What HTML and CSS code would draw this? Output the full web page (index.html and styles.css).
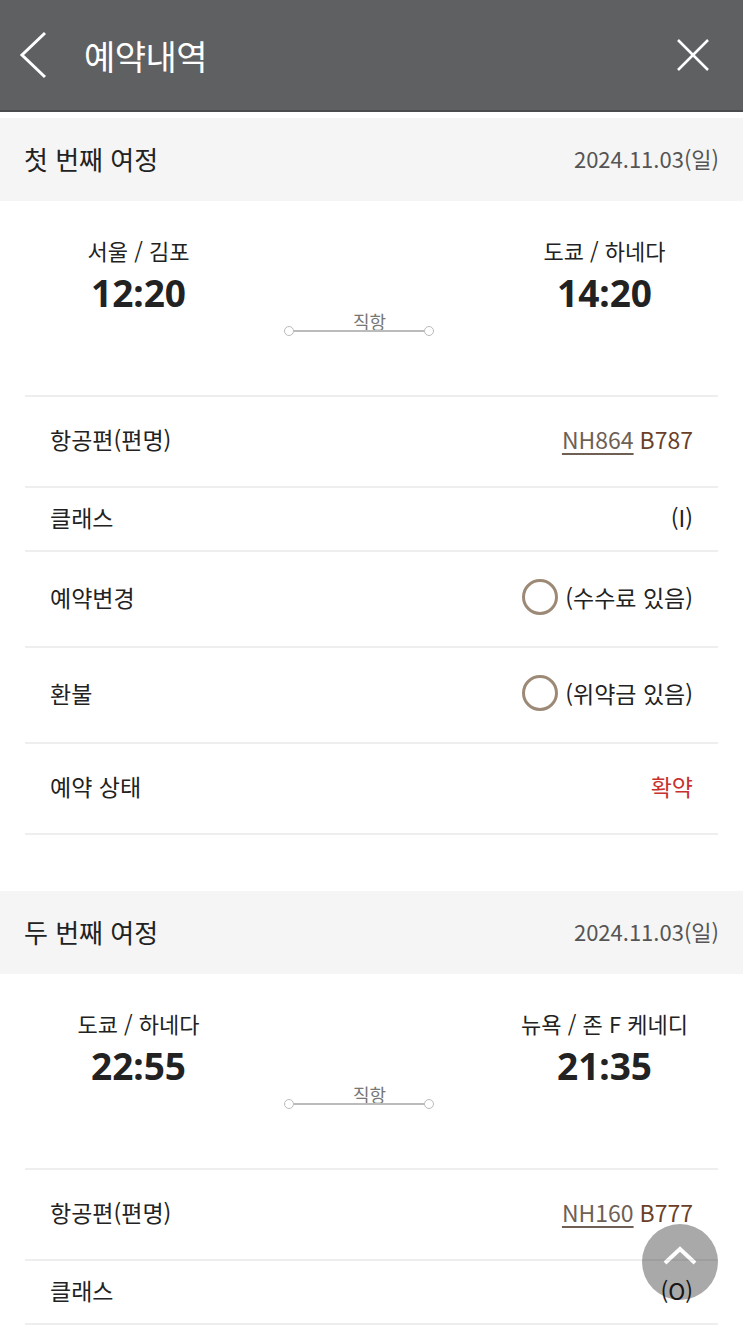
FILE: index.html
```html
<!DOCTYPE html>
<html lang="ko">
<head>
    <meta charset="UTF-8">
    <meta name="viewport" content="width=device-width, initial-scale=1.0">
    <title>예약내역</title>
    <link rel="stylesheet" href="styles.css">
</head>
<body>
    <!-- 상단 헤더 -->
    <header class="top-bar">
        <svg class="icon-back" width="30" height="50" viewBox="0 0 30 50">
            <polyline points="26,3 3,25 26,47" fill="none" stroke="#fff" stroke-width="3"/>
        </svg>
        <h1 class="top-title">예약내역</h1>
        <svg class="icon-close" width="34" height="34" viewBox="0 0 34 34">
            <line x1="2" y1="2" x2="32" y2="32" stroke="#fff" stroke-width="2.5"/>
            <line x1="32" y1="2" x2="2" y2="32" stroke="#fff" stroke-width="2.5"/>
        </svg>
    </header>

    <!-- 첫 번째 여정 -->
    <section class="trip">
        <div class="trip-head">
            <h2>첫 번째 여정</h2>
            <span class="trip-date">2024.11.03(일)</span>
        </div>
        <div class="flight">
            <div class="port">
                <span class="city">서울 / 김포</span>
                <span class="time">12:20</span>
            </div>
            <div class="route">
                <span class="route-label">직항</span>
                <div class="route-line"><i></i><b></b><i></i></div>
            </div>
            <div class="port">
                <span class="city">도쿄 / 하네다</span>
                <span class="time">14:20</span>
            </div>
        </div>
        <div class="rows">
            <div class="row">
                <span>항공편(편명)</span>
                <span class="value"><a class="flight-no">NH864</a> <span class="aircraft">B787</span></span>
            </div>
            <div class="row row-short">
                <span>클래스</span>
                <span class="value">(I)</span>
            </div>
            <div class="row row-tall">
                <span>예약변경</span>
                <span class="value"><span class="ring"></span>(수수료 있음)</span>
            </div>
            <div class="row row-tall">
                <span>환불</span>
                <span class="value"><span class="ring"></span>(위약금 있음)</span>
            </div>
            <div class="row">
                <span>예약 상태</span>
                <span class="value confirmed">확약</span>
            </div>
        </div>
    </section>

    <!-- 두 번째 여정 -->
    <section class="trip">
        <div class="trip-head">
            <h2>두 번째 여정</h2>
            <span class="trip-date">2024.11.03(일)</span>
        </div>
        <div class="flight">
            <div class="port">
                <span class="city">도쿄 / 하네다</span>
                <span class="time">22:55</span>
            </div>
            <div class="route">
                <span class="route-label">직항</span>
                <div class="route-line"><i></i><b></b><i></i></div>
            </div>
            <div class="port">
                <span class="city">뉴욕 / 존 F 케네디</span>
                <span class="time">21:35</span>
            </div>
        </div>
        <div class="rows">
            <div class="row">
                <span>항공편(편명)</span>
                <span class="value"><a class="flight-no">NH160</a> <span class="aircraft">B777</span></span>
            </div>
            <div class="row row-short">
                <span>클래스</span>
                <span class="value">(O)</span>
            </div>
        </div>
    </section>

    <!-- 맨 위로 버튼 -->
    <button class="to-top" aria-label="맨 위로">
        <svg width="34" height="20" viewBox="0 0 34 20">
            <polyline points="2,17 17,3 32,17" fill="none" stroke="#fff" stroke-width="4"/>
        </svg>
    </button>
</body>
</html>
```

FILE: styles.css
```css
body {
    margin: 0;
    background-color: #fff;
    font-family: "Noto Sans CJK KR", "Noto Sans", sans-serif;
    color: #222;
    overflow: hidden;
}
.top-bar {
    height: 110px;
    background-color: #5f6062;
    border-bottom: 2px solid #4a4b4d;
    display: flex;
    align-items: center;
    padding: 0 33px 0 19px;
}
.icon-back {
    margin-right: 35px;
}
.top-title {
    flex: 1;
    margin: 0;
    color: #fff;
    font-size: 34px;
    font-weight: 400;
    letter-spacing: -0.5px;
}
.trip {
    margin-top: 6px;
    margin-bottom: 56px;
}
.trip-head {
    height: 83px;
    background-color: #f5f5f5;
    display: flex;
    align-items: center;
    justify-content: space-between;
    padding: 0 24px 3px;
    box-sizing: border-box;
}
.trip-head h2 {
    margin: 0;
    font-size: 26px;
    font-weight: 400;
    color: #222;
}
.trip-date {
    font-size: 22px;
    color: #555;
}
.flight {
    height: 194px;
    box-sizing: border-box;
    margin: 0 25px;
    padding-top: 33px;
    display: flex;
}
.port {
    width: 227px;
    display: flex;
    flex-direction: column;
    align-items: center;
}
.city {
    font-size: 22px;
    line-height: 32px;
}
.time {
    font-family: "Noto Sans", sans-serif;
    font-size: 37px;
    font-weight: 700;
    line-height: 50px;
    margin-top: 2px;
}
.route {
    flex: 1;
    margin-top: 75px;
    padding-left: 32px;
    display: flex;
    flex-direction: column;
    align-items: flex-start;
}
.route-label {
    font-size: 18px;
    color: #777;
    line-height: 24px;
    margin-bottom: -7px;
    margin-left: 69px;
}
.route-line {
    display: flex;
    align-items: center;
    width: 150px;
}
.route-line i {
    width: 8px;
    height: 8px;
    border: 1.5px solid #bbb;
    border-radius: 50%;
    background: #fff;
}
.route-line b {
    flex: 1;
    height: 1.5px;
    background: #bbb;
}
.rows {
    margin: 0 25px;
}
.row {
    height: 89px;
    border-top: 2px solid #eee;
    display: flex;
    align-items: center;
    justify-content: space-between;
    padding: 0 25px 5px;
    box-sizing: content-box;
    font-size: 23px;
}
.rows .row:last-child {
    border-bottom: 2px solid #eee;
}
.row {
    height: 84px;
}
.row-short {
    height: 57px;
}
.row-tall {
    height: 89px;
}
.value {
    display: flex;
    align-items: center;
}
.flight-no {
    color: #6e6055;
    text-decoration: underline;
    text-underline-offset: 4px;
    margin-right: 6px;
}
.aircraft {
    color: #6b3f27;
}
.ring {
    width: 30px;
    height: 30px;
    border: 3px solid #9c8a77;
    border-radius: 50%;
    margin-right: 7px;
}
.confirmed {
    color: #c8312d;
}
.to-top {
    position: fixed;
    right: 25px;
    bottom: 37px;
    width: 76px;
    height: 76px;
    border: none;
    border-radius: 50%;
    background-color: #a9a9a9;
    mix-blend-mode: multiply;
    display: flex;
    align-items: center;
    justify-content: center;
    padding: 0 0 12px;
    cursor: pointer;
}
```
